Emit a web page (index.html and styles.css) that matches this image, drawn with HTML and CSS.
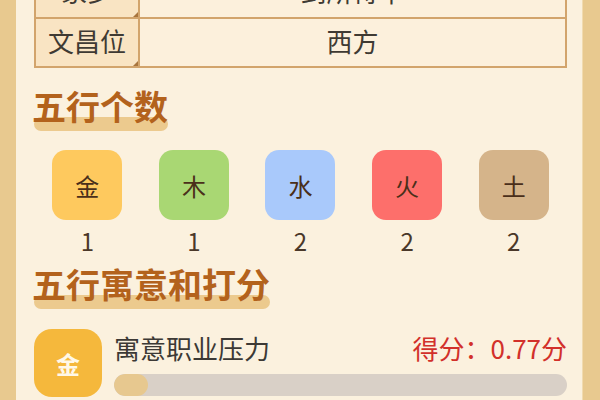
FILE: index.html
```html
<!DOCTYPE html>
<html lang="zh">
<head>
<meta charset="utf-8">
<link rel="stylesheet" href="styles.css">
</head>
<body>
<div class="page">
  <div class="strip"></div>
  <main class="content">
    <div class="table">
      <div class="row">
        <div class="label">家乡</div>
        <div class="value">到所待平</div>
      </div>
      <div class="row">
        <div class="label">文昌位</div>
        <div class="value">西方</div>
      </div>
    </div>

    <h2 class="heading"><span class="heading-text">五行个数</span></h2>

    <div class="counts">
      <div class="count"><div class="box jin">金</div><div class="num">1</div></div>
      <div class="count"><div class="box mu">木</div><div class="num">1</div></div>
      <div class="count"><div class="box shui">水</div><div class="num">2</div></div>
      <div class="count"><div class="box huo">火</div><div class="num">2</div></div>
      <div class="count"><div class="box tu">土</div><div class="num">2</div></div>
    </div>

    <h2 class="heading heading-2"><span class="heading-text">五行寓意和打分</span></h2>

    <div class="item">
      <div class="item-icon">金</div>
      <div class="item-body">
        <div class="item-top">
          <span class="item-title">寓意职业压力</span>
          <span class="item-score">得分：0.77分</span>
        </div>
        <div class="track"><div class="fill" style="width: 34px"></div></div>
      </div>
    </div>
  </main>
  <div class="strip strip-right"></div>
</div>
</body>
</html>
```

FILE: styles.css
```css
* { box-sizing: border-box; }
html, body {
  margin: 0;
  padding: 0;
  width: 600px;
  height: 400px;
  overflow: hidden;
  background: #fbf1de;
  font-family: "Noto Sans CJK SC", "Noto Sans", sans-serif;
}
.page {
  display: grid;
  grid-template-columns: 16px 1fr 17px;
  height: 400px;
  overflow: hidden;
}
.strip {
  background: #e8c98f;
  box-shadow: 1px 0 0 #f1dbb0;
}
.strip-right {
  box-shadow: -1px 0 0 #f1dbb0;
}
.content {
  padding: 0 16px 0 18px;
  background: #fbf1de;
}
.table {
  margin-top: -34px;
  border: 2px solid #d2a46c;
  background: #fcf0dc;
}
.row {
  display: grid;
  grid-template-columns: 104px 1fr;
  height: 49px;
}
.row + .row {
  border-top: 2px solid #d2a46c;
  height: 49px;
}
.label {
  position: relative;
  display: flex;
  align-items: center;
  justify-content: center;
  padding-bottom: 4px;
  background: #f9e4c3;
  border-right: 2px solid #d2a46c;
  font-size: 26px;
  color: #3f3a33;
}
.label::after {
  content: "";
  position: absolute;
  right: 0;
  bottom: 0;
  width: 0;
  height: 0;
  border-style: solid;
  border-width: 0 0 5px 5px;
  border-color: transparent transparent #a8753e transparent;
}
.value {
  display: flex;
  align-items: center;
  justify-content: center;
  padding-bottom: 4px;
  font-size: 26px;
  color: #3f3a33;
}
.heading {
  margin: 18px 0 0 0;
  font-size: 34px;
  line-height: 40px;
  font-weight: 700;
  color: #b3621c;
}
.heading-text {
  position: relative;
  display: inline-block;
  z-index: 0;
  margin-left: -2px;
}
.heading-text::after {
  content: "";
  position: absolute;
  left: 2px;
  right: 0;
  bottom: -5px;
  height: 14px;
  border-radius: 7px;
  background: #ecca8e;
  z-index: -1;
}
.heading-2 {
  margin-top: 8px;
}
.counts {
  display: grid;
  grid-template-columns: repeat(5, 1fr);
  margin-top: 24px;
}
.count {
  display: flex;
  flex-direction: column;
  align-items: center;
}
.box {
  width: 70px;
  height: 70px;
  border-radius: 14px;
  display: flex;
  align-items: center;
  justify-content: center;
  font-size: 24px;
  color: #4a2f1a;
}
.jin { background: #fec95e; }
.mu { background: #a9d773; }
.shui { background: #a9c9fb; }
.huo { background: #fd6f6b; }
.tu { background: #d5b48a; }
.num {
  margin-top: 6px;
  font-size: 24px;
  line-height: 30px;
  color: #4a3829;
}
.item {
  display: flex;
  gap: 12px;
  margin-top: 25px;
}
.item-icon {
  width: 68px;
  height: 68px;
  flex: none;
  border-radius: 18px;
  background: #f5b83c;
  color: #fff8e8;
  font-size: 24px;
  font-weight: 700;
  display: flex;
  align-items: center;
  justify-content: center;
}
.item-body {
  flex: 1;
  display: flex;
  flex-direction: column;
}
.item-top {
  display: flex;
  justify-content: space-between;
  align-items: center;
  height: 36px;
}
.item-title {
  font-size: 26px;
  color: #3c3935;
}
.item-score {
  font-size: 26px;
  color: #d2302a;
}
.track {
  margin-top: 9px;
  height: 22px;
  border-radius: 11px;
  background: #d9d0c7;
  overflow: hidden;
}
.fill {
  height: 100%;
  border-radius: 11px;
  background: #e7c88f;
}
```
